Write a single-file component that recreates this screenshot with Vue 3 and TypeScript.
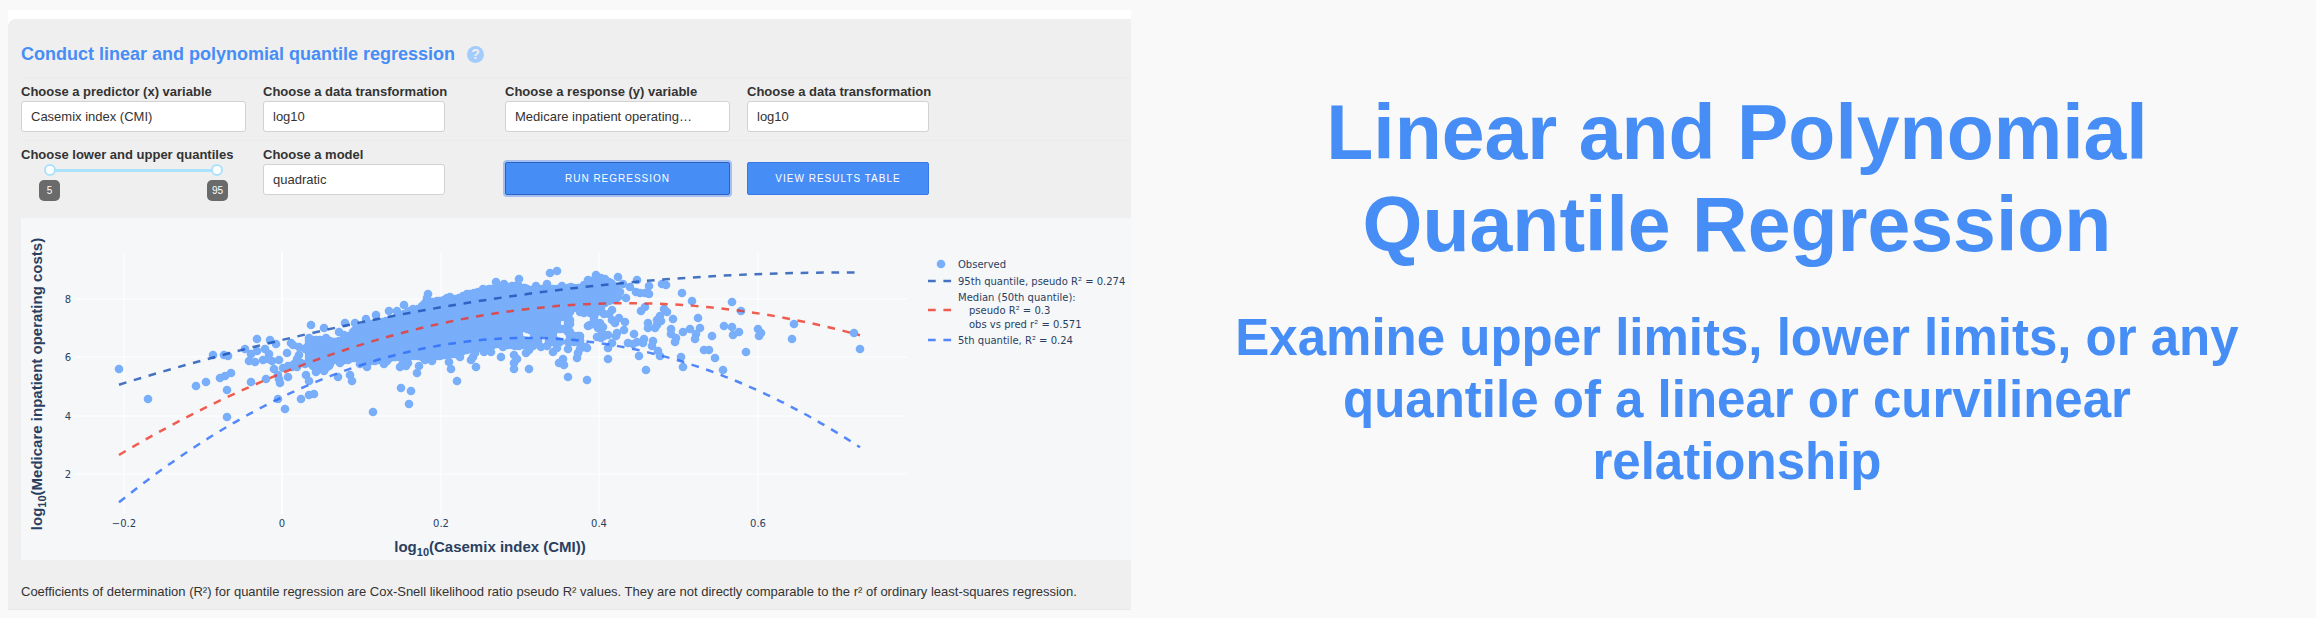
<script setup lang="ts">
import { ref } from 'vue'

type Point = [number, number]

const lower = ref(5)
const upper = ref(95)
const predictor = ref('Casemix index (CMI)')
const response = ref('Medicare inpatient operating…')
const xTransform = ref('log10')
const yTransform = ref('log10')
const model = ref('quadratic')

// Plot area geometry, in the units of the chart's view box
const xTicks = [
  { at: 124, label: '−0.2' },
  { at: 282, label: '0' },
  { at: 441, label: '0.2' },
  { at: 599, label: '0.4' },
  { at: 758, label: '0.6' },
]
const yTicks = [
  { at: 299, label: '8' },
  { at: 357, label: '6' },
  { at: 416, label: '4' },
  { at: 474, label: '2' },
]

const curves = [
  { name: 'high', d: 'M119 384.7Q489 270.4 859 272.5' },
  { name: 'median', d: 'M119 455Q489.5 233.4 860 335.3' },
  { name: 'low', d: 'M119 502.3Q489.5 203.8 860 447.3' },
]

// Dense band of observations: [x, top, bottom]
const band: [number, number, number][] = [
  [309, 341, 363], [316, 340, 368], [326, 340, 368], [335, 342, 359], [345, 340, 360],
  [355, 330, 358], [367, 325, 362], [382, 322, 360], [396, 318, 357], [410, 311, 356],
  [418, 309, 356], [425, 303, 357], [440, 301, 356], [455, 299, 354], [470, 294, 349],
  [485, 290, 347], [500, 288, 343], [515, 286, 346], [530, 290, 345], [545, 289, 343],
  [560, 289, 342], [570, 288, 342], [580, 288, 342], [590, 281, 340], [597, 279, 312],
  [605, 280, 303], [612, 284, 300], [620, 290, 298],
]
const gaps: Point[] = [
  [562, 322], [575, 316], [574, 328], [582, 330], [582, 321], [588, 319], [587, 338],
  [564, 338], [543, 340], [526, 335], [558, 335], [591, 331],
]

function bandPoints(): Point[] {
  const out: Point[] = []
  for (let i = 0; i < band.length - 1; i++) {
    const [x0, t0, b0] = band[i]
    const [x1, t1, b1] = band[i + 1]
    for (let x = x0; x < x1; x += 4) {
      const k = (x - x0) / (x1 - x0)
      const top = t0 + (t1 - t0) * k
      const bottom = b0 + (b1 - b0) * k
      for (let y = top; y < bottom; y += 4) out.push([x, Math.round(y)])
      out.push([x, Math.round(bottom)])
    }
  }
  return out.filter(([x, y]) => gaps.every(([gx, gy]) => Math.hypot(gx - x, gy - y) > 5))
}

const scattered: Point[] = [
  [119, 369], [148, 399], [196, 386], [206, 382], [220, 378], [225, 376], [231, 373], [213, 355],
  [224, 355], [228, 356], [227, 390], [227, 417], [257, 339], [245, 349], [270, 340], [276, 344],
  [251, 354], [257, 351], [249, 361], [255, 362], [263, 360], [265, 349], [269, 354], [268, 359],
  [272, 361], [274, 369], [279, 360], [287, 353], [291, 343], [293, 345], [299, 347], [299, 355],
  [297, 359], [283, 368], [288, 366], [292, 367], [297, 367], [301, 363], [305, 364], [294, 364],
  [307, 347], [305, 349], [251, 382], [266, 379], [278, 375], [279, 379], [280, 383], [288, 377],
  [306, 375], [309, 381], [316, 372], [324, 371], [329, 366], [338, 377], [340, 363], [350, 375],
  [352, 381], [367, 367], [360, 364], [348, 360], [278, 399], [301, 399], [309, 395], [314, 394],
  [285, 409], [373, 412], [311, 325], [324, 328], [345, 323], [355, 323], [339, 332], [344, 335],
  [366, 319], [376, 315], [389, 311], [397, 311], [404, 305], [413, 309], [384, 364], [387, 361],
  [400, 367], [403, 362], [405, 363], [417, 373], [401, 388], [411, 391], [409, 404], [309, 338],
  [326, 338], [428, 294], [427, 298], [450, 297], [447, 298], [467, 294], [475, 294], [483, 289],
  [491, 289], [496, 282], [504, 284], [507, 287], [519, 279], [518, 285], [525, 288], [536, 286],
  [547, 284], [550, 273], [557, 271], [562, 286], [571, 287], [588, 280], [596, 275], [408, 363],
  [406, 366], [419, 366], [432, 361], [425, 360], [451, 369], [449, 362], [460, 357], [471, 360],
  [473, 357], [476, 367], [475, 353], [484, 352], [491, 352], [457, 381], [501, 357], [503, 347],
  [514, 355], [517, 359], [514, 363], [514, 369], [529, 369], [526, 353], [529, 350], [533, 346],
  [541, 347], [547, 346], [553, 352], [557, 348], [568, 349], [563, 359], [559, 363], [564, 365],
  [577, 358], [578, 353], [580, 349], [587, 348], [568, 377], [587, 380], [601, 278], [605, 279],
  [611, 283], [618, 277], [623, 284], [630, 287], [637, 280], [649, 286], [662, 284], [666, 285],
  [636, 292], [640, 293], [645, 293], [649, 294], [626, 298], [618, 297], [620, 292], [682, 293],
  [692, 301], [732, 302], [741, 311], [645, 307], [641, 311], [664, 309], [667, 312], [673, 319],
  [698, 318], [700, 328], [660, 316], [657, 320], [661, 321], [648, 323], [648, 328], [655, 328],
  [657, 325], [671, 329], [671, 334], [676, 338], [675, 342], [683, 332], [690, 329], [696, 334],
  [695, 339], [712, 336], [724, 326], [732, 327], [733, 335], [739, 332], [758, 329], [761, 333],
  [759, 336], [746, 352], [704, 350], [709, 350], [715, 358], [723, 370], [681, 357], [683, 367],
  [646, 370], [639, 356], [658, 351], [660, 356], [652, 346], [653, 341], [644, 339], [643, 343],
  [637, 342], [634, 334], [628, 343], [633, 344], [624, 330], [625, 322], [619, 318], [615, 323],
  [612, 310], [604, 314], [609, 314], [612, 320], [617, 333], [616, 336], [608, 335], [612, 343],
  [608, 348], [608, 359], [586, 347], [594, 317], [595, 323], [600, 323], [603, 327], [598, 328],
  [602, 333], [597, 337], [601, 338], [604, 336], [599, 308], [794, 324], [792, 339], [854, 333],
  [860, 349],
]

const observed: Point[] = [...bandPoints(), ...scattered]
</script>

<template>
  <main class="page">
    <section class="demo">
      <div class="card">
        <header class="title">
          <h2>Conduct linear and polynomial quantile regression</h2>
          <button class="help" type="button" aria-label="Help">?</button>
        </header>

        <div class="row">
          <div class="field">
            <label for="predictor">Choose a predictor (x) variable</label>
            <select id="predictor" v-model="predictor"><option>Casemix index (CMI)</option></select>
          </div>
          <div class="field">
            <label for="x-transform">Choose a data transformation</label>
            <select id="x-transform" v-model="xTransform"><option>log10</option></select>
          </div>
          <div class="field second">
            <label for="response">Choose a response (y) variable</label>
            <select id="response" v-model="response"><option>Medicare inpatient operating…</option></select>
          </div>
          <div class="field">
            <label for="y-transform">Choose a data transformation</label>
            <select id="y-transform" v-model="yTransform"><option>log10</option></select>
          </div>
        </div>

        <div class="row">
          <div class="field">
            <label for="lower">Choose lower and upper quantiles</label>
            <div class="slider">
              <div class="rail"></div>
              <input id="lower" v-model.number="lower" type="range" min="5" max="95" />
              <input v-model.number="upper" type="range" min="5" max="95" aria-label="Upper quantile" />
              <div class="tips">
                <output for="lower">{{ lower }}</output>
                <output>{{ upper }}</output>
              </div>
            </div>
          </div>
          <div class="field">
            <label for="model">Choose a model</label>
            <select id="model" v-model="model"><option>quadratic</option></select>
          </div>
          <button class="action second focused" type="button">Run regression</button>
          <button class="action" type="button">View results table</button>
        </div>

        <svg class="chart" viewBox="21 218 1110 342" role="img" aria-label="Quantile regression plot">
          <g class="grid">
            <line v-for="t in xTicks" :key="t.label" :x1="t.at" :x2="t.at" y1="252" y2="514" :class="{ zero: t.label === '0' }" />
            <line v-for="t in yTicks" :key="t.label" x1="75" x2="907" :y1="t.at" :y2="t.at" />
          </g>
          <g class="dots">
            <circle v-for="([x, y], i) in observed" :key="i" :cx="x" :cy="y" r="4.3" />
          </g>
          <path v-for="c in curves" :key="c.name" class="curve" :class="c.name" :d="c.d" />
          <g class="ticks">
            <text v-for="t in xTicks" :key="t.label" :x="t.at" y="527" text-anchor="middle">{{ t.label }}</text>
            <text v-for="t in yTicks" :key="t.label" x="71" :y="t.at + 4" text-anchor="end">{{ t.label }}</text>
          </g>
          <text class="axis" x="490" y="552" text-anchor="middle">log<tspan class="sub" dy="4">10</tspan><tspan dy="-4">(Casemix index (CMI))</tspan></text>
          <text class="axis" transform="translate(42 384) rotate(-90)" text-anchor="middle">log<tspan class="sub" dy="4">10</tspan><tspan dy="-4">(Medicare inpatient operating costs)</tspan></text>
          <g class="legend">
            <circle class="key" cx="941" cy="264" r="4.3" />
            <text x="958" y="268">Observed</text>
            <path class="curve high" d="M928 281h24" />
            <text x="958" y="285">95th quantile, pseudo R² = 0.274</text>
            <path class="curve median" d="M928 310h24" />
            <text x="958" y="301">Median (50th quantile):</text>
            <text x="969" y="314">pseudo R² = 0.3</text>
            <text x="969" y="328">obs vs pred r² = 0.571</text>
            <path class="curve low" d="M928 340h24" />
            <text x="958" y="344">5th quantile, R² = 0.24</text>
          </g>
        </svg>

        <p class="note">
          Coefficients of determination (R²) for quantile regression are Cox-Snell likelihood ratio pseudo R² values.
          They are not directly comparable to the r² of ordinary least-squares regression.
        </p>
      </div>
    </section>

    <section class="pitch">
      <h1>Linear and Polynomial Quantile Regression</h1>
      <p>Examine upper limits, lower limits, or any quantile of a linear or curvilinear relationship</p>
    </section>
  </main>
</template>

<style>
body {
  background: #f9f9f9;
}
</style>

<style scoped>
.page {
  display: grid;
  grid-template-columns: 1fr 1fr;
  font-family: "Liberation Sans", Arial, sans-serif;
  color: #333;
}

.demo {
  min-width: 0;
  padding: 10px 27px 8px 8px;
  background: linear-gradient(#fff, #fff) 8px 10px / calc(100% - 35px) 20px no-repeat;
}

.card {
  margin-top: 9px;
  padding: 20px 0 7px 13px;
  border-top-left-radius: 8px;
  background: #efefef;
  box-shadow: 0 1px 0 #e9e9e9;
}

.title {
  display: flex;
  align-items: center;
  gap: 12px;
  height: 38px;
  border-bottom: 1px solid #ebebeb;
}

.title h2 {
  margin: 0 0 9px;
  font-size: 18px;
  line-height: 24px;
  color: #468df6;
  white-space: nowrap;
}

.help {
  width: 17px;
  height: 17px;
  margin: 0 0 8px;
  padding: 0;
  border: 0;
  border-radius: 50%;
  background: #a3cbfb;
  color: #efefef;
  font: bold 14px/17px "Liberation Sans", Arial, sans-serif;
}

.row {
  display: grid;
  grid-template-columns: minmax(0, 225px) minmax(0, 182px) minmax(0, 268px) minmax(0, 182px);
  column-gap: 17px;
  height: 62px;
  border-bottom: 1px solid #ebebeb;
}

.row + .row {
  height: 77px;
  border-bottom: 0;
}

.second {
  margin-left: 43px;
}

.field label {
  display: block;
  padding-top: 5px;
  font-size: 13px;
  font-weight: bold;
  line-height: 18px;
  white-space: nowrap;
}

.field select {
  display: block;
  width: 100%;
  height: 31px;
  padding: 0 9px;
  border: 1px solid #d2d2d2;
  border-radius: 3px;
  background: #fff;
  color: #333;
  font: 13px "Liberation Sans", Arial, sans-serif;
  appearance: none;
}

.slider {
  display: grid;
  grid-template-rows: 12px auto;
  margin: 0 23px;
}

.slider input,
.rail {
  grid-area: 1 / 1;
}

.rail {
  align-self: center;
  height: 3px;
  margin: 0 6px;
  background: #abe2fb;
}

.slider input {
  width: 100%;
  height: 12px;
  margin: 0;
  background: none;
  appearance: none;
  pointer-events: none;
}

.slider input::-webkit-slider-thumb {
  box-sizing: border-box;
  width: 12px;
  height: 12px;
  border: 2px solid #abe2fb;
  border-radius: 50%;
  background: #fff;
  appearance: none;
  pointer-events: auto;
}

.tips {
  display: flex;
  justify-content: space-between;
  margin: 4px -5px 0;
}

.tips output {
  width: 21px;
  border-radius: 5px;
  background: #6a6a6a;
  color: #fff;
  font-size: 10px;
  line-height: 21px;
  text-align: center;
}

.action {
  height: 33px;
  margin-top: 21px;
  padding: 0;
  border: 1px solid #3878e8;
  border-radius: 2px;
  background: #468df6;
  color: #fff;
  font: 10px "Liberation Sans", Arial, sans-serif;
  letter-spacing: 1px;
  text-transform: uppercase;
}

.action.focused {
  border-color: #2c62c4;
  box-shadow: 0 0 0 2px #a5bff0;
}

.chart {
  display: block;
  width: 100%;
  height: auto;
  background: #f5f7f9;
}

.grid line {
  stroke: #fff;
  stroke-width: 1;
}

.grid .zero {
  stroke-width: 2;
}

.dots circle,
.key {
  fill: #78aefa;
}

.curve {
  fill: none;
  stroke-width: 2.5;
  stroke-dasharray: 7.7;
  stroke-opacity: 0.8;
}

.high {
  stroke: #1a50b4;
}

.median {
  stroke: #ef3425;
}

.low {
  stroke: #2a6bfa;
}

.ticks text,
.legend text {
  fill: #2a3f5f;
  font: 10px "DejaVu Sans", Verdana, sans-serif;
}

.axis {
  fill: #2a3f5f;
  font-size: 15px;
  font-weight: bold;
}

.sub {
  font-size: 11px;
}

.note {
  margin: 0;
  padding-top: 22px;
  font-size: 13px;
  line-height: 20px;
}

.pitch {
  padding: 86px 64px 0;
  color: #468df6;
  font-weight: bold;
  text-align: center;
}

.pitch h1 {
  margin: 0;
  font-size: 77px;
  line-height: 92px;
}

.pitch p {
  margin: 37px 0 0;
  font-size: 51px;
  line-height: 62px;
}
</style>
